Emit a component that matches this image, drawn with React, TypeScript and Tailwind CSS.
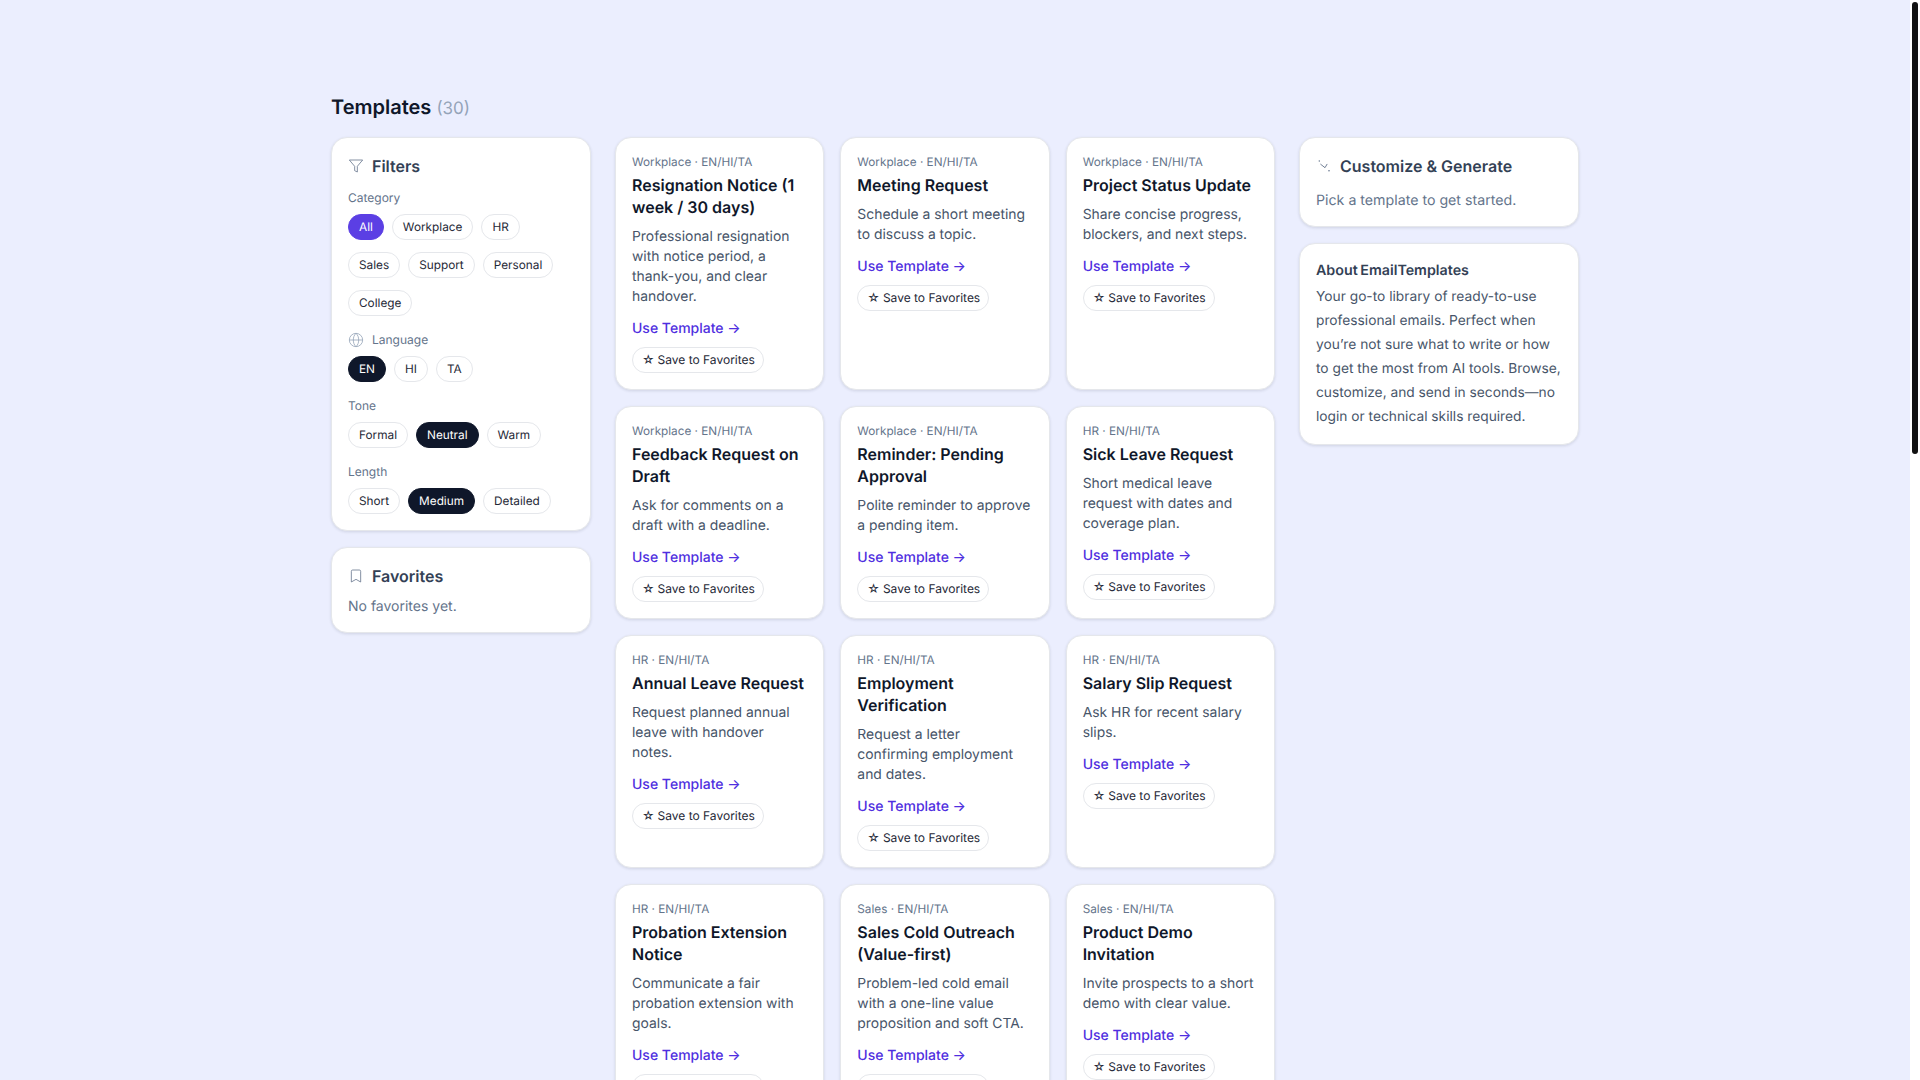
import React from "react";

const Chip = ({ label, on, accent }: { label: string; on?: boolean; accent?: boolean }) => (
  <span
    className={
      "inline-flex items-center h-[26px] px-[10px] rounded-full text-[11.8px] leading-4 border " +
      (accent
        ? "bg-[#5b3fe4] border-[#5b3fe4] text-white"
        : on
        ? "bg-[#0f172a] border-[#0f172a] text-white"
        : "bg-white border-[#e5e7eb] text-[#1f2937]")
    }
  >
    {label}
  </span>
);

const Label = ({ children }: { children: React.ReactNode }) => (
  <div className="text-xs leading-4 text-[#64748b]">{children}</div>
);

type T = { meta: string; title: string; desc: string };

const rows: T[] = [
  { meta: "Workplace · EN/HI/TA", title: "Resignation Notice (1 week / 30 days)", desc: "Professional resignation with notice period, a thank-you, and clear handover." },
  { meta: "Workplace · EN/HI/TA", title: "Meeting Request", desc: "Schedule a short meeting to discuss a topic." },
  { meta: "Workplace · EN/HI/TA", title: "Project Status Update", desc: "Share concise progress, blockers, and next steps." },
  { meta: "Workplace · EN/HI/TA", title: "Feedback Request on Draft", desc: "Ask for comments on a draft with a deadline." },
  { meta: "Workplace · EN/HI/TA", title: "Reminder: Pending Approval", desc: "Polite reminder to approve a pending item." },
  { meta: "HR · EN/HI/TA", title: "Sick Leave Request", desc: "Short medical leave request with dates and coverage plan." },
  { meta: "HR · EN/HI/TA", title: "Annual Leave Request", desc: "Request planned annual leave with handover notes." },
  { meta: "HR · EN/HI/TA", title: "Employment Verification", desc: "Request a letter confirming employment and dates." },
  { meta: "HR · EN/HI/TA", title: "Salary Slip Request", desc: "Ask HR for recent salary slips." },
  { meta: "HR · EN/HI/TA", title: "Probation Extension Notice", desc: "Communicate a fair probation extension with goals." },
  { meta: "Sales · EN/HI/TA", title: "Sales Cold Outreach (Value-first)", desc: "Problem-led cold email with a one-line value proposition and soft CTA." },
  { meta: "Sales · EN/HI/TA", title: "Product Demo Invitation", desc: "Invite prospects to a short demo with clear value." },
];

const card = "bg-white border border-[#e5e7eb] rounded-2xl shadow-[0_1px_3px_rgba(15,23,42,0.12)]";

const TemplateCard = ({ t }: { t: T }) => (
  <div className={card + " p-4 flex flex-col items-start"}>
    <div className="text-[11.75px] leading-4 text-[#64748b]">{t.meta}</div>
    <div className="mt-[4px] text-base leading-[22px] font-semibold text-[#0f172a]">{t.title}</div>
    <div className="mt-[9px] text-[13.9px] leading-5 text-[#475569]">{t.desc}</div>
    <div className="mt-[12px] text-sm leading-5 font-medium text-[#4f2fe0]">Use Template →</div>
    <div className="mt-[8px] inline-flex items-center h-[26px] pl-[9px] pr-[8px] rounded-full border border-[#e5e7eb] text-xs leading-4 text-[#1f2937]">
      <span className="mr-[3px]">☆</span>
      Save to Favorites
    </div>
  </div>
);

export default function App() {
  return (
    <div className="h-screen flex overflow-hidden font-['Inter',sans-serif] [text-rendering:geometricPrecision] antialiased">
      <main className="flex-1 min-w-0 overflow-hidden bg-[#ebeefe]">
        <div className="max-w-7xl mx-auto px-4 pt-[93px]">
          <h2 className="text-xl leading-7 font-semibold text-[#0f172a]">
            Templates <span className="text-[17px] leading-none font-normal text-[#94a3b8]">(30)</span>
          </h2>
          <div className="mt-4 grid grid-cols-[260px_1fr_280px] gap-6 items-start">
            <div className="flex flex-col gap-4">
              <div className={card + " p-4"}>
                <div className="flex items-center gap-2 text-base font-semibold text-[#334155]">
                  <svg width="16" height="16" viewBox="0 0 24 24" fill="none" stroke="#64748b" strokeWidth="1.2" strokeLinejoin="round"><path d="M22 3H2l8 9.46V19l4 2v-8.54L22 3z" /></svg>
                  Filters
                </div>
                <div className="mt-3"><Label>Category</Label></div>
                <div className="mt-[8px] flex flex-wrap gap-x-2 gap-y-3">
                  <Chip label="All" accent />
                  <Chip label="Workplace" />
                  <Chip label="HR" />
                  <Chip label="Sales" />
                  <Chip label="Support" />
                  <Chip label="Personal" />
                  <Chip label="College" />
                </div>
                <div className="mt-4 flex items-center gap-2">
                  <svg width="16" height="16" viewBox="0 0 24 24" fill="none" stroke="#94a3b8" strokeWidth="1.2"><circle cx="12" cy="12" r="10" /><path d="M2 12h20M12 2c3 3 4 6 4 10s-1 7-4 10c-3-3-4-6-4-10s1-7 4-10z" /></svg>
                  <Label>Language</Label>
                </div>
                <div className="mt-[8px] flex gap-2">
                  <Chip label="EN" on />
                  <Chip label="HI" />
                  <Chip label="TA" />
                </div>
                <div className="mt-4"><Label>Tone</Label></div>
                <div className="mt-[8px] flex gap-2">
                  <Chip label="Formal" />
                  <Chip label="Neutral" on />
                  <Chip label="Warm" />
                </div>
                <div className="mt-4"><Label>Length</Label></div>
                <div className="mt-[8px] flex gap-2">
                  <Chip label="Short" />
                  <Chip label="Medium" on />
                  <Chip label="Detailed" />
                </div>
              </div>
              <div className={card + " px-4 pt-4 pb-[15px]"}>
                <div className="flex items-center gap-2 text-base font-semibold text-[#334155]">
                  <svg width="16" height="16" viewBox="0 0 24 24" fill="none" stroke="#64748b" strokeWidth="1.2" strokeLinejoin="round"><path d="M19 21l-7-4-7 4V5a2 2 0 0 1 2-2h10a2 2 0 0 1 2 2v16z" /></svg>
                  Favorites
                </div>
                <div className="mt-[9px] text-sm leading-5 text-[#64748b]">No favorites yet.</div>
              </div>
            </div>
            <div className="grid grid-cols-3 gap-4">
              {rows.map((t) => (
                <TemplateCard key={t.title} t={t} />
              ))}
            </div>
            <div className="flex flex-col gap-4">
              <div className={card + " px-4 pt-4 pb-[15px]"}>
                <div className="flex items-center gap-2 text-base font-semibold text-[#334155]">
                  <svg width="16" height="16" viewBox="0 0 16 16" fill="none" stroke="#64748b" strokeWidth="0.9" strokeLinecap="round" strokeLinejoin="round"><circle cx="3.3" cy="3" r="0.7" fill="#64748b" stroke="none" /><circle cx="13" cy="12.7" r="0.8" fill="#64748b" stroke="none" /><path d="M4.7 6.3L9 9.7L11 6.3" /></svg>
                  Customize &amp; Generate
                </div>
                <div className="mt-[13px] text-[14.2px] leading-5 text-[#64748b]">Pick a template to get started.</div>
              </div>
              <div className={card + " px-4 pt-[17px] pb-[15px]"}>
                <div className="text-[14.25px] leading-5 font-semibold text-[#334155] [word-spacing:-1px]">About EmailTemplates</div>
                <div className="mt-1 text-[13.75px] leading-6 text-[#475569]">
                  Your go-to library of ready-to-use professional emails. Perfect when you’re not sure what to write or how to get the most from AI tools. Browse, customize, and send in seconds—no login or technical skills required.
                </div>
              </div>
            </div>
          </div>
        </div>
      </main>
      <aside className="w-[10px] shrink-0 bg-white pt-[2px] px-[2px]">
        <div className="h-[452px] rounded-full bg-[#111111]" />
      </aside>
    </div>
  );
}
